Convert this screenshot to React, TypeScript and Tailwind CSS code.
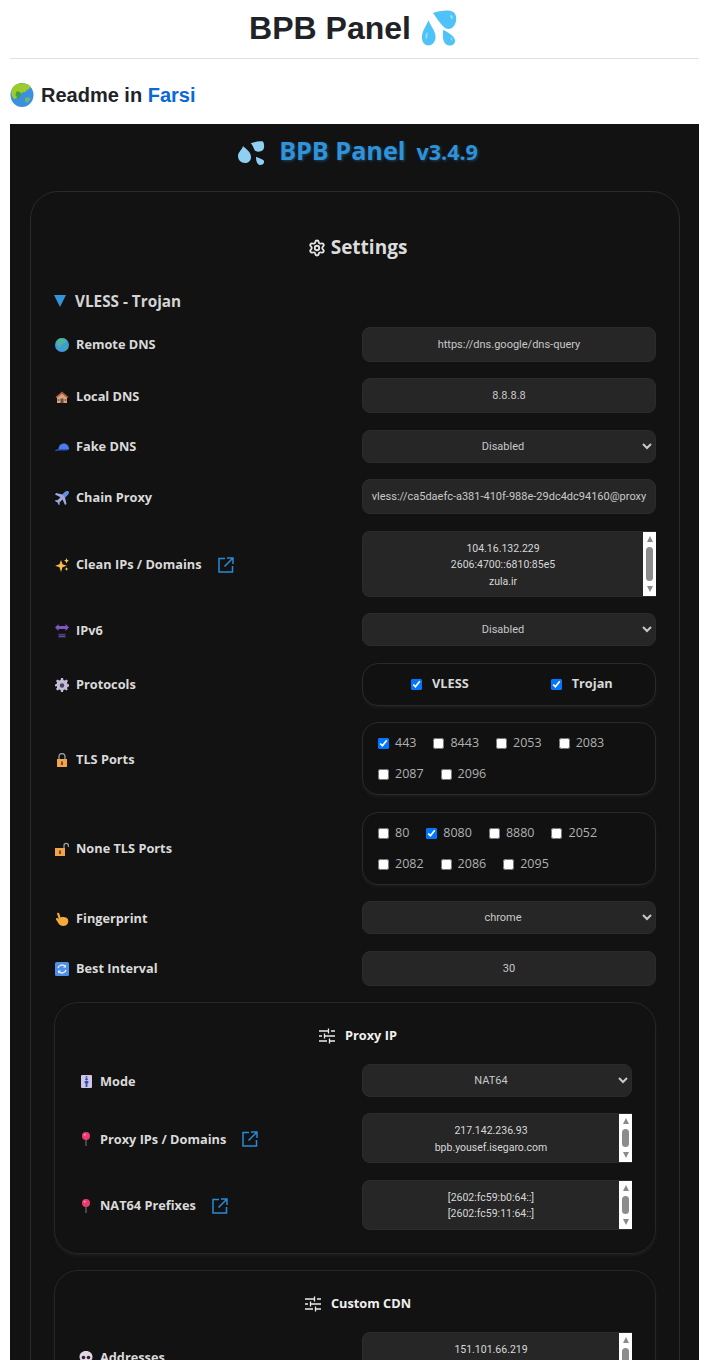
import type { ReactNode } from 'react'
import { Settings } from 'lucide-react'

const labelFont = "font-['Open_Sans',sans-serif]"
const valueFont = "font-['Roboto',sans-serif]"

function Drops({ className }: { className: string }) {
  return (
    <svg viewBox="0 0 36 36" className={className}>
      <path d="M11 3C16 1 24 0 29 1c4 1 6 5 5 10-1 6-6 10-11 7C18 14 15 8 11 3z" fill="#4fc3f7" />
      <path d="M6.500 10C8 15 13 20 13.500 26c.5 6-3.500 9.500-7 9.500C2 35.500-.5 31 0 26c.5-6 5-11 6.500-16z" fill="#4fc3f7" />
      <path d="M21 20c5 2 11 6 12 10 .5 4-3 6-6 5.500-4-.5-6-4.500-6-8.500 0-3 0-5 0-7z" fill="#4fc3f7" />
      <path d="M28 5c2 0 3 2 3 4-2 0-3-2-3-4zM3.500 26c0-2 1-3 2-4 0 2 0 6-1 7-.7-.5-1-2-1-3zM29 27c1.500 1 1.500 3 1 4-1-.5-1.500-2.500-1-4z" fill="#9be0fb" />
    </svg>
  )
}

function PanelDrops() {
  return (
    <svg viewBox="0 0 27 24" className="mt-[3px] h-[24px] w-[27px]">
      <path d="M5 5c3 3 8 6 8 11 0 4-3 6-6 6-4 0-7-3-7-7 0-4 4-6 5-10z" fill="#8fd0f2" />
      <path d="M12.700 2.300C17 .5 22-.3 25 .5c1.500 2.500 1.500 6.500 0 8.500-3 2.500-7 2-8.500 0-1.500-3-2-5.500-3.800-6.700z" fill="#8fd0f2" />
      <path d="M18 15.700c3 1.300 7 2.300 8 4.300.5 3-2 4-4 4-2.500-.5-4-3-4-8.300z" fill="#8fd0f2" />
    </svg>
  )
}

function Globe() {
  return (
    <svg viewBox="0 0 14 14" className="h-[14px] w-[14px]">
      <circle cx="7" cy="7" r="7" fill="#3f9be0" />
      <path d="M3 1.200C5 0 9 0 11 1.500c1 1.500 0 3-2 3.500-1 1-3 1-3 3S3.500 9 2 7C.8 5 1.500 2.500 3 1.200z" fill="#4fb59a" />
      <path d="M9 8c2-.5 3.500 0 3.500 1.500S10.500 12 9.500 11.500 8 9 9 8z" fill="#3fae8a" />
    </svg>
  )
}

function House() {
  return (
    <svg viewBox="0 0 14 14" className="h-[14px] w-[14px]">
      <path d="M7 1.500L.5 7l1 1L7 3.500 12.500 8l1-1z" fill="#b5533c" />
      <path d="M2 7.500L7 3.500l5 4V13H2z" fill="#d9a27a" />
      <path d="M5.500 8.500h3V13h-3z" fill="#6d4c41" />
      <path d="M2.500 9h2v2h-2zM9.500 9h2v2h-2z" fill="#8d6e63" />
    </svg>
  )
}

function Cap() {
  return (
    <svg viewBox="0 0 14 14" className="h-[14px] w-[14px]">
      <path d="M3.500 9.500C3.500 5.500 6 3.500 9 3.500s5 2.500 5 6z" fill="#4a7bef" />
      <path d="M0 11c1-1.500 2.500-2 4-2h10c-1 1.500-2 1.500-4 1.500H4c-1.500 0-3 1-4 .5z" fill="#2f56c4" />
    </svg>
  )
}

function Plane() {
  return (
    <svg viewBox="0 0 14 14" className="h-[14px] w-[14px]">
      <path d="M13.500.5c.5 1 0 2.500-1 3.500L10 6.500l1.500 6.500-1.500 1-2.500-5.500-3 3 .3 2-1 .5-1.300-2.500L0 10l.5-1 2 .3 3-3L0 3.500l1-1.500 6.500 1.500L10 1c1-1 2.500-1 3.500-.5z" fill="#9fa8da" />
      <path d="M13.500.5c.5 1 0 2.500-1 3.500L10 6.500 7.500 3.500 10 1c1-1 2.500-1 3.500-.5z" fill="#5c8fe0" />
    </svg>
  )
}

function Sparkles() {
  return (
    <svg viewBox="0 0 14 14" className="h-[14px] w-[14px]">
      <path d="M6 2l1.500 4.300 4.300 1.500-4.300 1.500L6 14 4.500 9.300.2 7.800l4.300-1.500z" fill="#fdb94c" />
      <path d="M11.500 0l.7 2 1.800.7-1.800.7-.7 2-.7-2-1.800-.7 1.800-.7z" fill="#ffd35c" />
      <path d="M11.500 9l.5 1.500 1.500.5-1.500.5-.5 1.500-.5-1.500-1.500-.5 1.500-.5z" fill="#ffd35c" />
    </svg>
  )
}

function DnsArrows() {
  return (
    <svg viewBox="0 0 14 14" className="h-[14px] w-[14px]">
      <path d="M3.500 0L0 3.500 3.500 7V5h7v2L14 3.500 10.500 0v2h-7z" fill="#7e57c2" />
      <path d="M3 9.500h8V14H3z" fill="#2a2440" />
      <path d="M4 10.500h6v.8H4zM4 12h6v.7H4z" fill="#7e57c2" />
    </svg>
  )
}

function EmojiGear() {
  return (
    <svg viewBox="0 0 14 14" className="h-[14px] w-[14px]">
      <path
        d="M6 0h2l.4 2 1.500.6L11.600 1.500 13 3l-1.100 1.600.6 1.500 1.500.4v2l-1.500.4-.6 1.500L13 11l-1.400 1.500-1.700-1.100-1.500.6L8 14H6l-.4-2-1.500-.6-1.700 1.100L1 11l1.100-1.600-.6-1.500L0 8.500v-2l1.500-.4.6-1.500L1 3l1.400-1.500 1.700 1.100 1.500-.6z"
        fill="#c4bcd8"
      />
      <circle cx="7" cy="7.500" r="2.200" fill="#4a4458" />
    </svg>
  )
}

function Lock({ open = false }: { open?: boolean }) {
  return (
    <svg viewBox="0 0 14 14" className="h-[14px] w-[14px]">
      {open ? (
        <path d="M9 6V3.500a2.200 2.200 0 0 1 4.400 0V5" fill="none" stroke="#9e9e9e" strokeWidth="1.200" />
      ) : (
        <path d="M4 6V3.500a3 3 0 0 1 6 0V6" fill="none" stroke="#9e9e9e" strokeWidth="1.300" />
      )}
      <path d={open ? 'M0 6h10v8H0z' : 'M2 6h10v8H2z'} fill="#f5a34a" />
      <path d={open ? 'M4 8.500h2V12H4z' : 'M6 8.500h2V12H6z'} fill="#6d4c41" />
    </svg>
  )
}

function Pointer() {
  return (
    <svg viewBox="0 0 14 14" className="h-[14px] w-[14px]">
      <path
        d="M2 1.500C2 .5 4 .5 4.300 1.500L5.500 5.500C8 4.500 12 5 13 7.500 14 10.500 12 14 8.500 14 5.500 14 4 12.500 3 10.500L1 7.500C.5 6.500 2 5.500 3 6.500L3.800 7.200z"
        fill="#f6a93b"
      />
    </svg>
  )
}

function Refresh() {
  return (
    <svg viewBox="0 0 14 14" className="h-[14px] w-[14px]">
      <rect width="14" height="14" rx="1.500" fill="#4f8fe8" />
      <path d="M3 6a4 4 0 0 1 7-1.500M11 8a4 4 0 0 1-7 1.500" fill="none" stroke="#e8f1fd" strokeWidth="1.300" />
      <path d="M11 2.500v3H8zM3 11.500v-3h3z" fill="#e8f1fd" />
    </svg>
  )
}

function Elevator() {
  return (
    <svg viewBox="0 0 12 14" className="h-[13px] w-[11px]">
      <rect width="12" height="14" rx="1" fill="#cfc6e6" />
      <circle cx="6" cy="4.500" r="1.300" fill="#2d4fa8" />
      <path d="M4 6.500h4V9H7v4H5V9H4z" fill="#2d4fa8" />
      <path d="M6 .8l1.500 1.700h-3z" fill="#2d4fa8" />
    </svg>
  )
}

function Pin() {
  return (
    <svg viewBox="0 0 14 14" className="h-[14px] w-[14px]">
      <path d="M6.400 7h1.200v7H6.400z" fill="#6b6b6b" />
      <circle cx="7" cy="4" r="4" fill="#ec3a6e" />
      <circle cx="5.800" cy="2.800" r="1" fill="#f8a0b8" />
    </svg>
  )
}

function Skull() {
  return (
    <svg viewBox="0 0 14 14" className="h-[14px] w-[14px]">
      <path d="M7 0c4 0 6.500 2.500 6.500 6 0 2-1 3.500-2.500 4.200V13H3v-2.800C1.500 9.500.5 8 .5 6 .5 2.500 3 0 7 0z" fill="#e4d7e4" />
      <circle cx="4.500" cy="6.500" r="1.800" fill="#2e2230" />
      <circle cx="9.500" cy="6.500" r="1.800" fill="#2e2230" />
    </svg>
  )
}

function EarthAsia() {
  return (
    <svg viewBox="0 0 24 24" className="h-[24px] w-[24px] shrink-0">
      <ellipse cx="12" cy="12" rx="11.500" ry="12" fill="#3d8fe0" />
      <path d="M4 3C7-.5 17-1 20 3c1 3-2 3-4 5-1 2-3 0-4 2s-3 1-4 3-3 3-4 3C1 13 0 7 4 3z" fill="#9ccc2b" />
      <path d="M6 9c2-1 4 0 5 1s0 3-1 4-1 3-2 2-1-2-2-3 0-3 0-4z" fill="#43a047" />
      <path d="M15 15c2-1 4-1 5 0s-1 3-2 4-3 0-3-1 0-2 0-3z" fill="#66bb6a" />
    </svg>
  )
}

function Tune() {
  return (
    <svg viewBox="0 0 16 16" className="h-[16px] w-[16px]" fill="none" stroke="#ececec" strokeWidth="1.300">
      <path d="M0 3h9M12 3h4M9.500 0.500v5M0 8h3M6 8h10M5.500 5.500v5M0 13h8M11 13h5M10.500 10.500v5" />
    </svg>
  )
}

function External() {
  return (
    <svg viewBox="0 0 16 16" className="h-[16px] w-[16px]" fill="none" stroke="#2a8bd4" strokeWidth="1.500">
      <path d="M7 1.500H1v13.500h13.500V9M9 1h6v6M15 1L6.500 9.500" />
    </svg>
  )
}

function Scrollbar({ thumb }: { thumb: string }) {
  return (
    <div className="flex w-[13px] shrink-0 flex-col items-center bg-white py-[4px]">
      <div className="h-0 w-0 border-x-[3.500px] border-b-[6px] border-x-transparent border-b-[#8a8a8a]" />
      <div className={`mt-[5px] w-[7px] rounded-full bg-[#8c8c8c] ${thumb}`} />
      <div className="mt-auto h-0 w-0 border-x-[3.500px] border-t-[6px] border-x-transparent border-t-[#8a8a8a]" />
    </div>
  )
}

function Label({ icon, text, link }: { icon: ReactNode; text: string; link?: boolean }) {
  return (
    <div className={`${labelFont} flex items-center pt-[2px] text-[12.75px] font-bold text-[#dadada]`}>
      <span className="mr-[7px] flex h-[14px] w-[14px] items-center justify-center">{icon}</span>
      <span>{text}</span>
      {link && (
        <span className="ml-[16px] flex">
          <External />
        </span>
      )}
    </div>
  )
}

function Row({ label, children, pl = 'pl-px' }: { label: ReactNode; children: ReactNode; pl?: string }) {
  return (
    <div className={`flex items-center justify-between ${pl}`}>
      {label}
      {children}
    </div>
  )
}

function TextField({ value, width = 'w-[294px]' }: { value: string; width?: string }) {
  return (
    <input
      readOnly
      value={value}
      className={`${valueFont} ${width} h-[35px] rounded-lg border border-[#2b2b2b] bg-[#262626] px-2 text-center text-[11px] text-[#c8c8c8] outline-none`}
    />
  )
}

function SelectField({ value, width = 'w-[294px]' }: { value: string; width?: string }) {
  return (
    <select
      value={value}
      onChange={() => {}}
      className={`${valueFont} ${width} h-[33px] rounded-lg border border-[#2b2b2b] bg-[#262626] text-center text-[11px] text-[#c8c8c8] outline-none`}
    >
      <option>{value}</option>
    </select>
  )
}

function TextArea({
  lines,
  width = 'w-[294px]',
  height,
  thumb,
}: {
  lines: string[]
  width?: string
  height: string
  thumb: string
}) {
  return (
    <div className={`flex ${width} ${height} overflow-hidden rounded-l-lg border-y border-l border-[#2b2b2b] bg-[#262626]`}>
      <div className={`${valueFont} flex-1 pt-[9px] text-center text-[10.5px] leading-[16.5px] text-[#d8d8d8]`}>
        {lines.map((line) => (
          <div key={line}>{line}</div>
        ))}
      </div>
      <Scrollbar thumb={thumb} />
    </div>
  )
}

function Check({ on = false }: { on?: boolean }) {
  return <input type="checkbox" checked={on} readOnly className="m-0 h-[11px] w-[11px] shrink-0" />
}

function Ports({ rows }: { rows: { port: string; on?: boolean }[][] }) {
  return (
    <div className="flex w-[294px] flex-col gap-[14px] rounded-2xl border border-[#2a2a2a] bg-[#111111] px-[15px] pt-[12px] pb-[11px] shadow-[0_2px_3px_#1c1c1c]">
      {rows.map((row) => (
        <div key={row[0].port} className="flex h-[17px] items-center gap-[17px]">
          {row.map((p) => (
            <label key={p.port} className={`${labelFont} flex items-center gap-[6px] text-[12.5px] text-[#b0b0b0]`}>
              <Check on={p.on} />
              {p.port}
            </label>
          ))}
        </div>
      ))}
    </div>
  )
}

function SubCard({ title, className, children }: { title: string; className?: string; children: ReactNode }) {
  return (
    <div className={`rounded-3xl border border-[#262626] pt-[23px] pr-[23px] pb-[23px] pl-[24px] shadow-[0_2px_3px_#1e1e1e] ${className ?? ''}`}>
      <h4 className={`${labelFont} mb-[18.500px] flex items-center justify-center gap-[10px] pl-[5px] text-[12.75px] font-bold text-[#f0f0f0]`}>
        <Tune />
        {title}
      </h4>
      <div className="flex flex-col gap-[16.500px]">{children}</div>
    </div>
  )
}

export default function App() {
  const narrow = 'w-[270px]'
  return (
    <div className="h-[1360px] overflow-hidden bg-white pr-[9px] pl-[10px] font-['Liberation_Sans',sans-serif]">
      <h1 className="flex h-[59px] items-center justify-center gap-[11px] border-b border-[#dfe2e5] pr-[2px] pb-[2px] text-[32px] font-bold text-[#1f2328]">
        BPB Panel
        <Drops className="h-[36px] w-[36px]" />
      </h1>
      <h3 className="mt-[24px] flex h-[24px] items-center gap-[7px] text-[20px] font-bold text-[#1f2328]">
        <EarthAsia />
        <span>
          Readme in <a className="text-[#0969da]">Farsi</a>
        </span>
      </h3>

      <div className="mt-[17px] bg-[#121212] pr-[19px] pl-[20px]">
        <div className={`${labelFont} flex h-[67px] items-center justify-center pb-[13px] pl-[6px] font-bold text-[#3092d8] [text-shadow:1px_1px_3px_#3092d866]`}>
          <PanelDrops />
          <span className="ml-[14px] text-[25.2px]">BPB Panel</span>
          <span className="ml-[11px] pt-[3px] text-[21.5px]">v3.4.9</span>
        </div>

        <div className="rounded-[28px] border border-[#2a2a2a] px-[23px] pt-[42px] pb-[40px]">
          <h2 className={`${labelFont} flex h-[27px] items-center justify-center gap-[5px] pl-[5px] text-[19px] font-bold text-[#dcdcdc]`}>
            <Settings className="h-[18px] w-[18px] text-[#e4e4e4]" strokeWidth={2.4} />
            Settings
          </h2>
          <h3 className={`${labelFont} mt-[30px] mb-[15.500px] flex h-[20px] items-center gap-[9px] text-[15.3px] font-bold text-[#d4d4d4]`}>
            <span className="h-0 w-0 border-x-[6.500px] border-t-[12px] border-x-transparent border-t-[#3393d8]" />
            VLESS - Trojan
          </h3>

          <div className="flex flex-col gap-[16.500px]">
            <Row label={<Label icon={<Globe />} text="Remote DNS" />}>
              <TextField value="https://dns.google/dns-query" />
            </Row>
            <Row label={<Label icon={<House />} text="Local DNS" />}>
              <TextField value="8.8.8.8" />
            </Row>
            <Row label={<Label icon={<Cap />} text="Fake DNS" />}>
              <SelectField value="Disabled" />
            </Row>
            <Row label={<Label icon={<Plane />} text="Chain Proxy" />}>
              <TextField value="vless://ca5daefc-a381-410f-988e-29dc4dc94160@proxy" />
            </Row>
            <Row label={<Label icon={<Sparkles />} text="Clean IPs / Domains" link />}>
              <TextArea lines={['104.16.132.229', '2606:4700::6810:85e5', 'zula.ir']} height="h-[66px]" thumb="h-[34px]" />
            </Row>
            <Row label={<Label icon={<DnsArrows />} text="IPv6" />}>
              <SelectField value="Disabled" />
            </Row>
            <Row label={<Label icon={<EmojiGear />} text="Protocols" />}>
              <div className={`${labelFont} flex h-[43px] w-[294px] items-center gap-[82px] rounded-2xl border border-[#2a2a2a] bg-[#111111] pl-[48px] text-[12.75px] font-bold text-[#d8d8d8] shadow-[0_2px_3px_#1c1c1c]`}>
                <label className="flex items-center gap-[10px]">
                  <Check on />
                  VLESS
                </label>
                <label className="flex items-center gap-[10px]">
                  <Check on />
                  Trojan
                </label>
              </div>
            </Row>
            <Row label={<Label icon={<Lock />} text="TLS Ports" />}>
              <Ports
                rows={[
                  [{ port: '443', on: true }, { port: '8443' }, { port: '2053' }, { port: '2083' }],
                  [{ port: '2087' }, { port: '2096' }],
                ]}
              />
            </Row>
            <Row label={<Label icon={<Lock open />} text="None TLS Ports" />}>
              <Ports
                rows={[
                  [{ port: '80' }, { port: '8080', on: true }, { port: '8880' }, { port: '2052' }],
                  [{ port: '2082' }, { port: '2086' }, { port: '2095' }],
                ]}
              />
            </Row>
            <Row label={<Label icon={<Pointer />} text="Fingerprint" />}>
              <SelectField value="chrome" />
            </Row>
            <Row label={<Label icon={<Refresh />} text="Best Interval" />}>
              <TextField value="30" />
            </Row>

            <SubCard title="Proxy IP">
              <Row pl="pl-0" label={<Label icon={<Elevator />} text="Mode" />}>
                <SelectField value="NAT64" width={narrow} />
              </Row>
              <Row pl="pl-0" label={<Label icon={<Pin />} text="Proxy IPs / Domains" link />}>
                <TextArea lines={['217.142.236.93', 'bpb.yousef.isegaro.com']} width={narrow} height="h-[50px]" thumb="h-[18px]" />
              </Row>
              <Row pl="pl-0" label={<Label icon={<Pin />} text="NAT64 Prefixes" link />}>
                <TextArea lines={['[2602:fc59:b0:64::]', '[2602:fc59:11:64::]']} width={narrow} height="h-[50px]" thumb="h-[18px]" />
              </Row>
            </SubCard>

            <SubCard title="Custom CDN">
              <Row pl="pl-0" label={<Label icon={<Skull />} text="Addresses" />}>
                <TextArea lines={['151.101.66.219', 'cdn.example.com']} width={narrow} height="h-[50px]" thumb="h-[18px]" />
              </Row>
            </SubCard>
          </div>
        </div>
      </div>
    </div>
  )
}
